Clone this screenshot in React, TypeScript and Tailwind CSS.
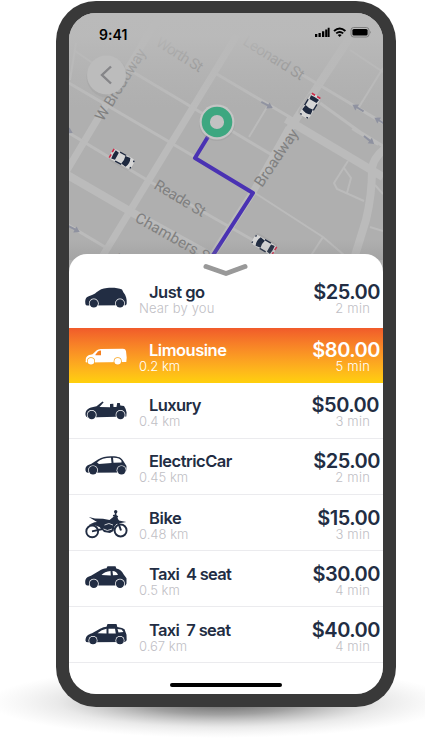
import React from "react";

function Wheel({ x, y, r = 4.2, bg = "#fff" }: { x: number; y: number; r?: number; bg?: string }) {
  return (
    <>
      <circle cx={x} cy={y} r={r + 0.7} fill={bg} />
      <circle cx={x} cy={y} r={r} fill="currentColor" />
    </>
  );
}

function VehicleIcon({ kind }: { kind: string }) {
  const common = "block h-[32px] w-[44px] shrink-0";
  switch (kind) {
    case "hatch":
      return (
        <svg className={common} viewBox="1 2 44 32" fill="currentColor">
          <path d="M1.300 21 C1 16.500 2.500 14.800 6 13.800 C9 13 10.500 12 12.500 10.300 C15.500 7.800 18.500 6.400 23 6 C29 5.500 34.500 6 38 7.600 L39.500 10.500 C42 13.500 43 17 42.700 21.500 L42 23.200 L3 23.400 C1.800 23.200 1.400 22.500 1.300 21Z" />
          <Wheel x={9.800} y={21.400} />
          <Wheel x={36} y={21.400} />
        </svg>
      );
    case "van":
      return (
        <svg className={common} viewBox="1 1.500 44 32" fill="currentColor">
          <path d="M1.800 20.500 C1.600 16.500 3 14.700 8.500 13.800 L12.500 10 C13.500 9 15 8.500 17 8.400 L39 8.200 Q41.500 8.200 42 10.500 L42.700 17 L42.300 21.500 L3 22 Q1.500 22 1.500 20.500Z" />
          <path d="M11.500 13.900 L14 11 Q15 10 17 10 L17 14.700 L11.500 14.700Z" fill="#f5801f" />
          <Wheel x={7} y={20.700} r={3.300} bg="#f9a31a" />
          <Wheel x={33.700} y={20.700} r={3.300} bg="#f9a31a" />
        </svg>
      );
    case "cabrio":
      return (
        <svg className={common} viewBox="1 2 44 32" fill="currentColor">
          <path d="M1.500 20 C1.300 16 3 14 7 12.500 L12.500 11.200 L18.500 6.400 L19.700 7.200 L15.500 12 L26 12.200 L26 8.900 L29.300 8.700 L29.500 12 L32.500 12 L33.200 8 L35.800 7.900 L36.300 10.500 L40 11 Q42 13.700 42.600 17.500 L42.300 21.500 L3.500 22.400 Q1.800 22 1.500 20Z" />
          <Wheel x={7.700} y={20} />
          <Wheel x={36.500} y={20} />
        </svg>
      );
    case "electric":
      return (
        <svg className={common} viewBox="1 2.500 44 32" fill="currentColor">
          <path d="M1.500 20 C1.200 16 3 14.600 7 13.500 L14 9 C18.500 6.300 22 5.700 28 5.800 C34.500 5.900 37.500 7 39.500 10.800 L42.500 15.500 L42.300 20 L41 22 L3.500 22.300 Q1.700 22 1.500 20Z" />
          <path d="M13 12 C16.500 8.600 21 7.200 27 7.200 L27.500 12.400 L15 13.500Z M29 7.200 C33.500 7 36 8 37.500 10.200 L37.500 12 L29.500 12.200Z" fill="white" />
          <Wheel x={9} y={19.800} />
          <Wheel x={37.500} y={19.800} />
        </svg>
      );
    case "bike":
      return (
        <svg className={common} viewBox="0 0.500 44 32" fill="currentColor">
          <g fill="none" stroke="currentColor">
            <circle cx="7.200" cy="21.900" r="5.900" strokeWidth="1.900" />
            <circle cx="35.600" cy="21" r="6" strokeWidth="1.900" />
            <path d="M7 21.900 L20 19" strokeWidth="1.800" />
            <path d="M30.300 5 L36 21" strokeWidth="2" />
            <path d="M28 6 L33 7.200 M30.300 6 L31 1.500" strokeWidth="1.500" />
          </g>
          <path d="M3.800 7.600 L10 9 L18 9.300 L24.500 10.500 L29.500 6.500 L32 8.500 L34 11 L41.300 12.500 L34.500 13.800 L31.500 14.500 L29.500 17 L28.500 21.500 L25 23.500 L19 22.500 L14.500 17.500 L9 15.500 L3.800 15.200 L9.500 12.800 L12 12.500Z" />
          <circle cx="30.700" cy="2.300" r="1.700" />
          <path d="M19.500 15.500 Q24 12.500 28 15.500 M18.500 19.500 Q22 22.500 27 19.500" fill="none" stroke="white" strokeWidth=".8" />
        </svg>
      );
    case "taxi4":
      return (
        <svg className={common} viewBox="1 3.500 44 32" fill="currentColor">
          <path d="M1.300 21 C.8 16.500 2.500 14.500 7 13.300 L15 8.500 C18 6.800 20 6.200 22.500 5.800 L23.500 3.700 L31.500 3.700 L32.300 5.900 C36 6.300 38 8.500 39.700 12 L42.500 15.800 L42.500 21 L41.500 23 L3 23 Q1.500 22.700 1.300 21Z" />
          <path d="M17.500 12.500 Q20.500 9 26.500 8.500 L26.800 12.900Z M28.500 8.500 Q32.500 8.500 34 12.500 L29 12.700Z" fill="white" />
          <Wheel x={9.800} y={21.200} />
          <Wheel x={36} y={21.200} />
        </svg>
      );
    default:
      return (
        <svg className={common} viewBox="1 1.700 44 32" fill="currentColor">
          <path d="M1.500 20.500 C1.500 16 3.500 14.500 8 13 L16 8.500 C18.500 7.200 20.500 6.600 22.500 6.500 L23.500 3.800 L32.500 3.800 L33.300 6.700 L38 7.700 L40.500 9 L42.500 14.500 L42.700 20 L41 21.700 L4 22 Q1.700 22 1.500 20.500Z" />
          <path d="M13.500 13 Q17.500 9.300 22.500 8.500 L22.500 13.200Z M24.500 8.500 L31 8.500 L31.800 13.100 L24.500 13.200Z M33.500 8.600 L37.500 9.200 L39.500 11.700 L34.500 12.300Z" fill="white" />
          <Wheel x={9} y={20.200} r={3.800} />
          <Wheel x={36} y={20.200} r={3.800} />
        </svg>
      );
  }
}

function MapCar({ x, y, angle }: { x: number; y: number; angle: number }) {
  return (
    <g transform={`translate(${x} ${y}) rotate(${angle})`}>
      <rect x="-12" y="-4.500" width="25" height="12" rx="4" fill="#777" opacity=".15" />
      <rect x="-12.500" y="-5.500" width="25" height="11" rx="3.500" fill="#d6d6d6" />
      <path d="M-11.800 -5 V-1.200 M-11.800 1.200 V5" stroke="#d02a49" strokeWidth="1.600" />
      <path d="M-9.700 -4.700 Q-10.500 0 -9.700 4.700 L-5.800 4 V-4Z M1.500 -4.200 Q3 0 1.500 4.200 L6.800 5 Q9.300 0 6.800 -5Z" fill="#1e293f" />
      <path d="M-5 -5.100 H2 M-5 5.100 H2" stroke="#1e293f" strokeWidth="1.400" />
      <path d="M11.500 -4.500 V-2.800 M11.500 2.800 V4.500" stroke="#1e293f" strokeWidth="1.300" />
    </g>
  );
}

function MapArrow({ x, y, angle }: { x: number; y: number; angle: number }) {
  return (
    <g transform={`translate(${x} ${y}) rotate(${angle})`} fill="#8f92a0">
      <path d="M-6.500 -1 H1 V-3.500 L6.500 0 L1 3.500 V1 H-6.500Z" />
    </g>
  );
}

function CityMap() {
  return (
    <svg className="block h-[262px] w-[314px]" viewBox="69 13 314 262">
      <defs>
        <linearGradient id="fade" x1="0" y1="0" x2="0" y2="1">
          <stop offset="0" stopColor="#bababa" />
          <stop offset=".25" stopColor="#bababa" stopOpacity=".95" />
          <stop offset="1" stopColor="#b5b5b5" stopOpacity="0" />
        </linearGradient>
        <linearGradient id="edge" x1="0" y1="0" x2="0" y2="1">
          <stop offset="0" stopColor="#888" stopOpacity="0" />
          <stop offset="1" stopColor="#888" stopOpacity=".3" />
        </linearGradient>
      </defs>
      <rect x="69" y="13" width="314" height="262" fill="#afafaf" />
      <g fill="none" stroke="#bbbbbb">
        <path strokeWidth="7" d="M60 182 L158 18 M99 262 L237 35 M208 262 L253 192 L289 128" />
        <path strokeWidth="8" d="M287 133 L356 28 M64 173 L133 213 L220 261 M286 119 L383 177 M388 146 Q372 158 372 170 Q372 195 366 220 L353 262" />
        <path strokeWidth="3" d="M69 83 L195 157 M128 69 L200 112 L272 155 M69 133 L147 180 L265 247 M68 225 L110 250 M215 73 L293 119 M296 71 L383 123 M320 103 L360 132 L383 146" />
        <path strokeWidth="2" d="M76 43 L70 80 M75 51 L100 68 M267 107 L249 137 M350 50 L383 72 M383 68 L359 107 M255 193 L323 237 L344 255 M323 237 L310 257 M348 161 L334 183 L337 189 L364 201 M344 168 L351 178 L347 193 M370 227 L383 231 M375 185 L383 194 M352 129 L378 145" />
      </g>
      <g fill="#808080" fontFamily="Roboto, sans-serif" fontSize="15">
        <text transform="translate(103 122) rotate(-58)" textLength="82">W Broadway</text>
        <text transform="translate(262 188) rotate(-56)" textLength="66">Broadway</text>
        <text transform="translate(153 188) rotate(31)" textLength="57">Reade St</text>
        <text transform="translate(134 221) rotate(29.500)" textLength="88">Chambers St</text>
        <text transform="translate(155 45) rotate(32)" textLength="52">Worth St</text>
        <text transform="translate(242 44) rotate(32)" textLength="69">Leonard St</text>
        <text transform="translate(114 261) rotate(30)" fontSize="13">W</text>
      </g>
      <MapArrow x={267} y={105} angle={28} />
      <MapArrow x={358} y={108} angle={211} />
      <MapArrow x={380} y={121} angle={211} />
      <MapArrow x={369} y={140} angle={38} />
      <MapArrow x={74} y={229} angle={28} />
      <MapArrow x={67} y={130} angle={28} />
      <rect x="69" y="13" width="314" height="95" fill="url(#fade)" />
      <path d="M217 122 L195 158 L253 193 L208 263" fill="none" stroke="#4a32b3" strokeWidth="4" strokeLinejoin="round" />
      <circle cx="217" cy="123" r="18" fill="#999" opacity=".35" />
      <circle cx="217" cy="122" r="17.500" fill="#c5c5c5" />
      <circle cx="217" cy="122" r="11.200" fill="#c2c2c2" stroke="#3da780" strokeWidth="8.200" />
      <MapCar x={310} y={106} angle={121} />
      <MapCar x={122} y={159} angle={29} />
      <MapCar x={264} y={245} angle={211} />
      <rect x="69" y="240" width="314" height="20" fill="url(#edge)" />
      <circle cx="107" cy="77" r="20.500" fill="#888" opacity=".15" />
      <circle cx="106.500" cy="75" r="19.500" fill="#bcbcbc" />
      <path d="M111 66.500 L102 75 L111 83.500" fill="none" stroke="#858588" strokeWidth="2.400" />
    </svg>
  );
}

function StatusIcons() {
  return (
    <svg className="block h-[12px] w-[58px]" viewBox="314 26 58 12">
      <path d="M315 34h2.300v3h-2.300z M318.500 33h2.300v4h-2.300z M322 31.200h2.300v5.800h-2.300z M325.200 29.500h2.100v7.500h-2.100z M327.700 27.800h1.900v9.200h-1.900z" fill="black" />
      <g fill="none" stroke="black" strokeWidth="1.900">
        <path d="M334 31 Q339.700 26 345.400 31 M336.200 33.400 Q339.700 30.400 343.200 33.400" />
      </g>
      <path d="M337.700 35 Q339.700 33.500 341.700 35 L339.700 37Z" fill="black" />
      <rect x="351" y="27.500" width="18" height="9.500" rx="2.700" fill="none" stroke="#777" strokeWidth=".9" />
      <rect x="352.400" y="28.900" width="15.200" height="6.700" rx="1.500" />
      <path d="M370 30.700 Q371.500 32.200 370 33.800Z" fill="#777" />
    </svg>
  );
}

type Ride = { kind: string; name: string; distance: string; price: string; eta: string; active?: boolean; row: string; title: string; sub: string; cost: string };

const rides: Ride[] = [
  { kind: "hatch", name: "Just go", distance: "Near by you", price: "$25.00", eta: "2 min", row: "h-[57px] pt-[13px]", title: "tracking-[-0.5px]", sub: "tracking-[0.15px]", cost: "mr-[3px]" },
  { kind: "van", name: "Limousine", distance: "0.2 km", price: "$80.00", eta: "5 min", active: true, row: "h-[54.500px] pt-[14px]", title: "tracking-[-0.5px]", sub: "", cost: "mr-[3px]" },
  { kind: "cabrio", name: "Luxury", distance: "0.4 km", price: "$50.00", eta: "3 min", row: "h-[56px] pt-[14.500px] border-b", title: "tracking-[-0.6px]", sub: "", cost: "mr-[4px]" },
  { kind: "electric", name: "ElectricCar", distance: "0.45 km", price: "$25.00", eta: "2 min", row: "h-[56px] pt-[14.500px] border-b", title: "tracking-[-0.5px]", sub: "", cost: "mr-[3px]" },
  { kind: "bike", name: "Bike", distance: "0.48 km", price: "$15.00", eta: "3 min", row: "h-[56px] pt-[15px] border-b", title: "tracking-[-0.4px]", sub: "", cost: "mr-[3px]" },
  { kind: "taxi4", name: "Taxi  4 seat", distance: "0.5 km", price: "$30.00", eta: "4 min", row: "h-[56px] pt-[15px] border-b", title: "tracking-[-0.7px]", sub: "", cost: "mr-[3px]" },
  { kind: "taxi7", name: "Taxi  7 seat", distance: "0.67 km", price: "$40.00", eta: "4 min", row: "h-[56px] pt-[15px] border-b", title: "tracking-[-0.65px]", sub: "", cost: "mr-[3px]" },
];

function RideRow({ ride }: { ride: Ride }) {
  return (
    <li className={`flex items-start border-[#ebebee] pl-4 ${ride.row} ${ride.active ? "bg-linear-to-b from-[#f05a2a] to-[#ffd00c] text-white" : "text-[#222d43]"}`}>
      <VehicleIcon kind={ride.kind} />
      <div className="ml-[10px] flex-1">
        <div className={`ml-[10px] whitespace-pre text-[16.500px] leading-4 font-[580] ${ride.title}`}>{ride.name}</div>
        <div className={`text-[13px] leading-4 font-[330] whitespace-nowrap ${ride.sub} ${ride.active ? "text-white" : "text-[#bfc0c5]"}`}>{ride.distance}</div>
      </div>
      <div className="flex flex-col items-end">
        <div className={`text-[20px] leading-4 font-[560] tracking-[-0.500px] ${ride.cost}`}>{ride.price}</div>
        <div className={`mr-[13px] text-[13px] leading-4 font-[330] tracking-[0.200px] ${ride.active ? "text-white" : "text-[#bfc0c5]"}`}>{ride.eta}</div>
      </div>
    </li>
  );
}

export default function App() {
  return (
    <div className="relative h-[751px] w-[425px] overflow-hidden bg-white pt-px pl-[56px] font-[Inter,sans-serif]">
      <svg className="absolute inset-0" width="425" height="751" viewBox="0 0 425 751">
        <defs>
          <radialGradient id="ground">
            <stop offset="0" stopColor="#444" stopOpacity=".85" />
            <stop offset=".35" stopColor="#555" stopOpacity=".55" />
            <stop offset=".7" stopColor="#888" stopOpacity=".18" />
            <stop offset="1" stopColor="#aaa" stopOpacity="0" />
          </radialGradient>
        </defs>
        <ellipse cx="220" cy="702" rx="232" ry="36" fill="url(#ground)" />
      </svg>
      <div className="relative h-[705.500px] w-[339.500px] rounded-[40px] bg-[#393939] pt-3 pl-[13px]">
        <div className="h-[681px] w-[314px] overflow-hidden rounded-[27px] bg-[#afafaf]">
          <div className="relative h-[241px]">
            <CityMap />
            <div className="absolute top-[13px] right-[11px] left-[30px] flex items-start justify-between">
              <span className="mt-px text-[14px] leading-4 font-semibold tracking-[0.1px] text-black">9:41</span>
              <StatusIcons />
            </div>
          </div>
          <div className="relative flex h-[440px] flex-col rounded-t-[18px] bg-white">
            <svg className="mx-auto block h-[17px] w-[48px] shrink-0 overflow-visible" viewBox="0 0 48 17">
              <path d="M4 12.500 L24 19.500 L43 12.500" fill="none" stroke="#999" strokeWidth="5" strokeLinecap="round" strokeLinejoin="round" />
            </svg>
            <ul>
              {rides.map((ride) => (
                <RideRow key={ride.kind} ride={ride} />
              ))}
            </ul>
            <div className="mx-auto mt-[20px] h-1 w-[112px] rounded-full bg-black" />
          </div>
        </div>
      </div>
    </div>
  );
}
